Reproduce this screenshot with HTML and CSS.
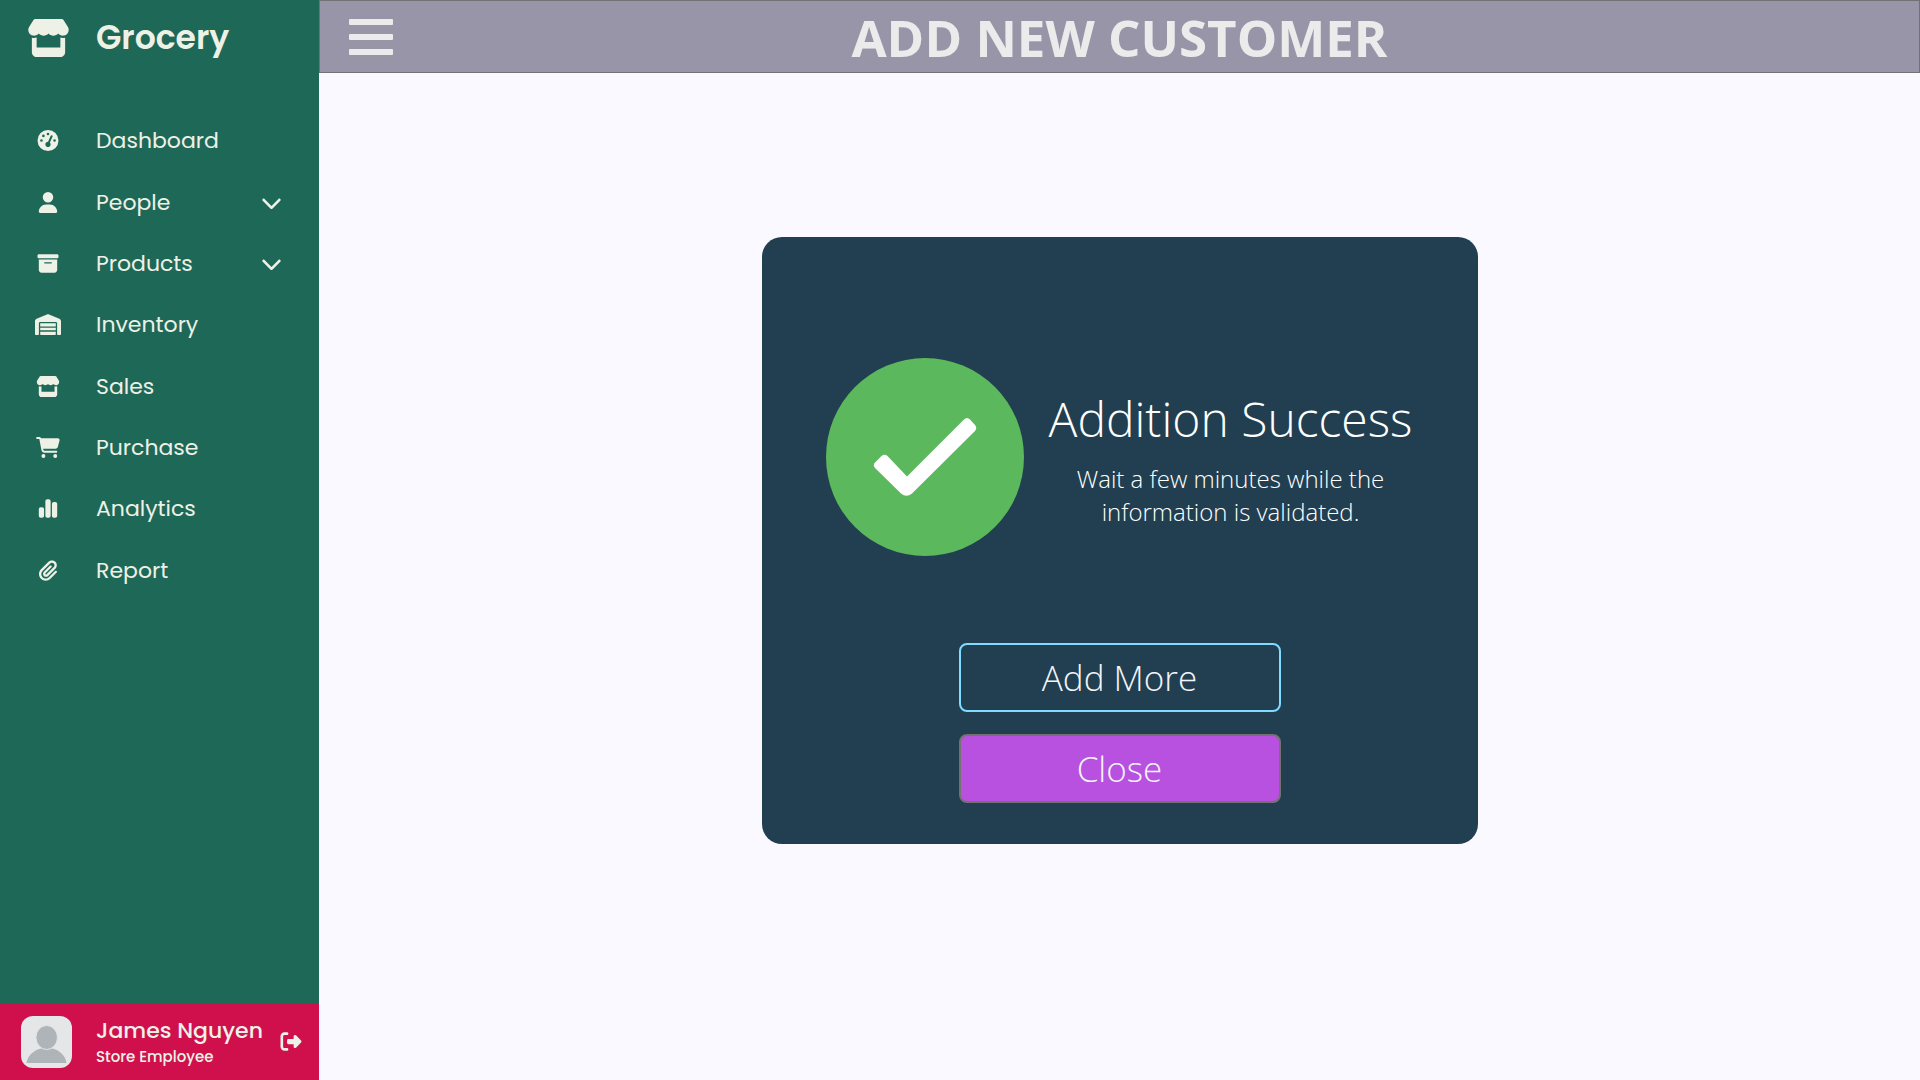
FILE: index.html
```html
<!DOCTYPE html>
<html lang="en">
<head>
<meta charset="utf-8">
<meta name="viewport" content="width=device-width, initial-scale=1">
<title>Add New Customer</title>
<link rel="stylesheet" href="styles.css">
</head>
<body>
<svg class="sprite" aria-hidden="true">
  <symbol id="store" viewBox="0 0 576 512"><path d="M547.6 103.8L490.3 13.1C485.2 5 476.1 0 466.4 0H109.6C99.9 0 90.8 5 85.7 13.1L28.3 103.8c-29.6 46.8-3.4 111.9 51.9 119.4c4 .5 8.1 .8 12.1 .8c26.1 0 49.3-11.4 65.2-29c15.9 17.6 39.1 29 65.2 29c26.1 0 49.3-11.4 65.2-29c15.9 17.6 39.1 29 65.2 29c26.2 0 49.3-11.4 65.2-29c16 17.6 39.1 29 65.2 29c4.1 0 8.1-.3 12.1-.8c55.5-7.4 81.8-72.5 52.1-119.4zM499.7 254.9l-.1 0c-5.3 .7-10.7 1.1-16.2 1.1c-12.4 0-24.3-1.9-35.4-5.3V384H128V250.6c-11.2 3.5-23.2 5.4-35.6 5.4c-5.5 0-11-.4-16.3-1.1l-.1 0c-4.1-.6-8.1-1.3-12-2.3V384v64c0 35.3 28.7 64 64 64H448c35.3 0 64-28.7 64-64V384 252.6c-4 1-8 1.8-12.3 2.3z"/></symbol>
  <symbol id="chevron" viewBox="0 0 512 512"><path d="M233.4 406.6c12.5 12.5 32.8 12.5 45.3 0l192-192c12.5-12.5 12.5-32.8 0-45.3s-32.8-12.5-45.3 0L256 338.7 86.6 169.4c-12.5-12.5-32.8-12.5-45.3 0s-12.5 32.8 0 45.3l192 192z"/></symbol>
</svg>
<div class="app">
  <aside class="sidebar">
    <a class="brand" href="#">
      <span class="icon-cell"><svg class="logo"><use href="#store"/></svg></span>
      <span>Grocery</span>
    </a>
    <nav class="menu">
      <a class="menu-item" href="#">
        <span class="icon-cell"><svg class="icon" viewBox="0 0 512 512"><path fill-rule="evenodd" d="M0 256a256 256 0 1 1 512 0A256 256 0 1 1 0 256zM288 96a32 32 0 1 0-64 0 32 32 0 1 0 64 0zM256 416c35.300 0 64-28.700 64-64c0-17.400-6.900-33.100-18.100-44.600L366 161.700c5.300-12.100-.2-26.300-12.300-31.600s-26.300 .2-31.600 12.300L257.900 288H256c-35.300 0-64 28.700-64 64s28.700 64 64 64zM176 144a32 32 0 1 0-64 0 32 32 0 1 0 64 0zM96 288a32 32 0 1 0 0-64 32 32 0 1 0 0 64zM448 256a32 32 0 1 0-64 0 32 32 0 1 0 64 0z"/></svg></span>
        <span class="label">Dashboard</span>
      </a>
      <a class="menu-item" href="#">
        <span class="icon-cell"><svg class="icon" viewBox="0 0 448 512"><path d="M224 256A128 128 0 1 0 224 0a128 128 0 1 0 0 256zm-45.700 48C79.800 304 0 383.800 0 482.300C0 498.700 13.300 512 29.700 512H418.300c16.400 0 29.700-13.300 29.700-29.700C448 383.800 368.200 304 269.700 304H178.300z"/></svg></span>
        <span class="label">People</span>
        <svg class="chevron"><use href="#chevron"/></svg>
      </a>
      <a class="menu-item" href="#">
        <span class="icon-cell"><svg class="icon" viewBox="0 0 512 512"><path d="M32 32H480c17.700 0 32 14.300 32 32V96c0 17.700-14.300 32-32 32H32C14.300 128 0 113.700 0 96V64C0 46.300 14.300 32 32 32zm0 128H480V416c0 35.300-28.700 64-64 64H96c-35.300 0-64-28.700-64-64V160zm128 80c0 8.800 7.200 16 16 16H336c8.800 0 16-7.200 16-16s-7.200-16-16-16H176c-8.800 0-16 7.200-16 16z"/></svg></span>
        <span class="label">Products</span>
        <svg class="chevron"><use href="#chevron"/></svg>
      </a>
      <a class="menu-item" href="#">
        <span class="icon-cell"><svg class="icon" viewBox="0 0 640 512"><path d="M0 488V171.300c0-26.200 15.900-49.700 40.200-59.400L308.100 4.800c7.600-3.100 16.100-3.100 23.800 0L599.800 111.900c24.300 9.700 40.200 33.300 40.200 59.400V488c0 13.300-10.700 24-24 24H568c-13.300 0-24-10.700-24-24V224c0-17.700-14.300-32-32-32H128c-17.700 0-32 14.300-32 32V488c0 13.300-10.700 24-24 24H24c-13.300 0-24-10.700-24-24zm488 24l-336 0c-13.300 0-24-10.700-24-24V432H512l0 56c0 13.300-10.700 24-24 24zM128 400V336H512v64H128zm0-96V224H512l0 80H128z"/></svg></span>
        <span class="label">Inventory</span>
      </a>
      <a class="menu-item" href="#">
        <span class="icon-cell"><svg class="icon"><use href="#store"/></svg></span>
        <span class="label">Sales</span>
      </a>
      <a class="menu-item" href="#">
        <span class="icon-cell"><svg class="icon" viewBox="0 0 576 512"><path d="M0 24C0 10.700 10.700 0 24 0H69.500c22 0 41.500 12.800 50.600 32h411c26.300 0 45.500 25 38.600 50.400l-41 152.300c-8.500 31.400-37 53.300-69.500 53.300H170.700l5.400 28.500c2.200 11.300 12.100 19.500 23.600 19.500H488c13.300 0 24 10.700 24 24s-10.700 24-24 24H199.700c-34.600 0-64.300-24.600-70.700-58.500L77.400 54.500c-.7-3.800-4-6.500-7.900-6.500H24C10.700 48 0 37.300 0 24zM128 464a48 48 0 1 1 96 0 48 48 0 1 1 -96 0zm336-48a48 48 0 1 1 0 96 48 48 0 1 1 0-96z"/></svg></span>
        <span class="label">Purchase</span>
      </a>
      <a class="menu-item" href="#">
        <span class="icon-cell"><svg class="icon" viewBox="0 0 448 512"><path d="M160 80c0-26.500 21.500-48 48-48h32c26.500 0 48 21.500 48 48V432c0 26.500-21.500 48-48 48H208c-26.500 0-48-21.500-48-48V80zM0 272c0-26.500 21.500-48 48-48H80c26.500 0 48 21.500 48 48V432c0 26.500-21.500 48-48 48H48c-26.500 0-48-21.500-48-48V272zM368 96h32c26.500 0 48 21.500 48 48V432c0 26.500-21.500 48-48 48H368c-26.500 0-48-21.500-48-48V144c0-26.500 21.500-48 48-48z"/></svg></span>
        <span class="label">Analytics</span>
      </a>
      <a class="menu-item" href="#">
        <span class="icon-cell"><svg class="icon" viewBox="0 0 448 512"><path d="M364.200 83.800c-24.400-24.400-64-24.400-88.400 0l-184 184c-42.100 42.100-42.100 110.300 0 152.400s110.300 42.100 152.400 0l152-152c10.900-10.900 28.700-10.900 39.600 0s10.900 28.700 0 39.600l-152 152c-64 64-167.600 64-231.600 0s-64-167.600 0-231.600l184-184c46.300-46.300 121.300-46.300 167.600 0s46.300 121.300 0 167.600l-176 176c-28.600 28.600-75 28.600-103.600 0s-28.600-75 0-103.600l144-144c10.900-10.900 28.700-10.900 39.600 0s10.900 28.700 0 39.600l-144 144c-6.700 6.700-6.700 17.700 0 24.400s17.700 6.700 24.400 0l176-176c24.400-24.400 24.400-64 0-88.400z"/></svg></span>
        <span class="label">Report</span>
      </a>
    </nav>
    <div class="profile">
      <svg class="avatar" viewBox="0 0 51 52" role="img" aria-label="Profile picture"><rect width="51" height="52" fill="#e4e6e7"/><path d="M5.500 47C7 38 15 32 25.700 32S44 38 45.500 47z" fill="#aeb4b7"/><ellipse cx="25.700" cy="21.500" rx="10.800" ry="12" fill="#aeb4b7" stroke="#e4e6e7"/></svg>
      <div class="person">
        <span class="person-name">James Nguyen</span>
        <span class="person-role">Store Employee</span>
      </div>
      <button class="logout" type="button" aria-label="Log out"><svg class="icon" viewBox="0 0 512 512"><path d="M377.900 105.900L500.700 228.700c7.200 7.200 11.300 17.100 11.300 27.300s-4.100 20.100-11.300 27.300L377.900 406.100c-6.400 6.400-15 9.900-24 9.900c-18.700 0-33.900-15.200-33.900-33.900l0-62.100-128 0c-17.700 0-32-14.300-32-32l0-64c0-17.700 14.300-32 32-32l128 0 0-62.100c0-18.700 15.200-33.900 33.900-33.900c9 0 17.600 3.600 24 9.900zM160 96L96 96c-17.700 0-32 14.300-32 32l0 256c0 17.700 14.300 32 32 32l64 0c17.700 0 32 14.300 32 32s-14.300 32-32 32l-64 0c-53 0-96-43-96-96L0 128C0 75 43 32 96 32l64 0c17.700 0 32 14.300 32 32s-14.300 32-32 32z"/></svg></button>
    </div>
  </aside>
  <div class="content">
    <header class="topbar">
      <button class="toggle" type="button" aria-label="Toggle menu"><span></span><span></span><span></span></button>
      <h1>ADD NEW CUSTOMER</h1>
    </header>
    <main class="stage">
      <section class="card">
        <div class="message">
          <svg class="check" viewBox="0 0 198 198"><circle cx="99" cy="99" r="99" fill="#5cb85c"/><path d="M49 104.500L55.500 98q3-2.500 6 0L81 118.500 138 61.500q3-3 6 0L149 67q2.500 3 0 6L86 135.500q-5.500 4.500-11 0L49 110q-2.500-3 0-5.500z" fill="#fff"/></svg>
          <div class="message-text">
            <h2>Addition Success</h2>
            <p>Wait a few minutes while the information is validated.</p>
          </div>
        </div>
        <div class="actions">
          <button class="btn btn-outline" type="button">Add More</button>
          <button class="btn btn-solid" type="button">Close</button>
        </div>
      </section>
    </main>
  </div>
</div>
</body>
</html>
```
FILE: styles.css
```css
* { box-sizing: border-box; }

body {
  margin: 0;
  background: #f9f9ff;
  color: #eef1e6;
  font-family: Poppins, Inter, sans-serif;
}

a { color: inherit; text-decoration: none; }
button { font: inherit; color: inherit; cursor: pointer; }
svg { display: block; fill: currentColor; }
.sprite { display: none; }

.app { display: flex; min-height: 100vh; }

/* Sidebar */
.sidebar {
  display: flex;
  flex-direction: column;
  flex: 0 0 319px;
  background: #1e6858;
}

.icon-cell {
  display: flex;
  justify-content: center;
  flex: 0 0 96px;
}

.brand {
  display: flex;
  align-items: center;
  height: 76px;
  font-size: 33px;
  font-weight: 600;
}

.logo { width: 43px; height: 38px; }

.menu {
  display: flex;
  flex-direction: column;
  height: 491px;
  margin: 34px 0 auto;
}

.menu-item {
  display: flex;
  flex: 1;
  align-items: center;
  padding-right: 37px;
  font-size: 22px;
}

.label { flex: 1; }
.icon { width: 26px; height: 21px; }
.chevron { width: 21px; height: 21px; }

.profile {
  display: flex;
  align-items: center;
  height: 77px;
  padding: 0 15px 0 21px;
  background: #cf104c;
}

.avatar {
  width: 51px;
  height: 52px;
  margin-right: 24px;
  border-radius: 12px;
}

.person {
  display: flex;
  flex: 1;
  flex-direction: column;
  white-space: nowrap;
}

.person-name { font-size: 22px; font-weight: 500; line-height: 30px; }
.person-role { font-size: 15px; font-weight: 500; line-height: 22px; }
.logout { padding: 0; border: 0; background: none; }

/* Main area */
.content {
  display: flex;
  flex: 1;
  flex-direction: column;
  font-family: "Segoe UI", "Open Sans", sans-serif;
}

.topbar {
  display: grid;
  grid-template-columns: 74px 1fr 74px;
  align-items: center;
  height: 73px;
  border: 1px solid #727272;
  background: #9895a8;
  color: #ebebeb;
}

.topbar h1 {
  margin: 0;
  font-size: 51px;
  font-weight: 700;
  line-height: 70px;
  text-align: center;
}

.toggle {
  display: grid;
  gap: 9px;
  width: 44px;
  margin-left: 29px;
  padding: 0;
  border: 0;
  background: none;
}

.toggle span { height: 6px; border-radius: 1px; background: currentColor; }

.stage {
  display: grid;
  flex: 1;
  justify-items: center;
  align-items: start;
  padding: 164px 24px;
}

.card {
  width: 100%;
  max-width: 716px;
  padding: 121px 64px 41px;
  border-radius: 20px;
  background: #213f50;
}

.message { display: flex; align-items: center; gap: 24px; }
.check { flex: none; width: 198px; height: 198px; }
.message-text { flex: 1; color: #fff; text-align: center; }

.message-text h2 {
  margin: 0 0 10px;
  font-size: 48px;
  font-weight: 300;
  line-height: 66px;
  white-space: nowrap;
}

.message-text p {
  max-width: 330px;
  margin: 0 auto;
  font-size: 24px;
  font-weight: 300;
  line-height: 33px;
}

.actions {
  display: flex;
  flex-direction: column;
  align-items: center;
  gap: 22px;
  margin-top: 87px;
}

.btn {
  width: 322px;
  height: 69px;
  border: 2px solid #727272;
  border-radius: 8px;
  color: #f3f4f8;
  font-size: 35px;
  font-weight: 300;
  line-height: 60px;
}

.btn-outline { border-color: #7fdbff; background: none; }
.btn-solid { background: #b850e0; }
```
